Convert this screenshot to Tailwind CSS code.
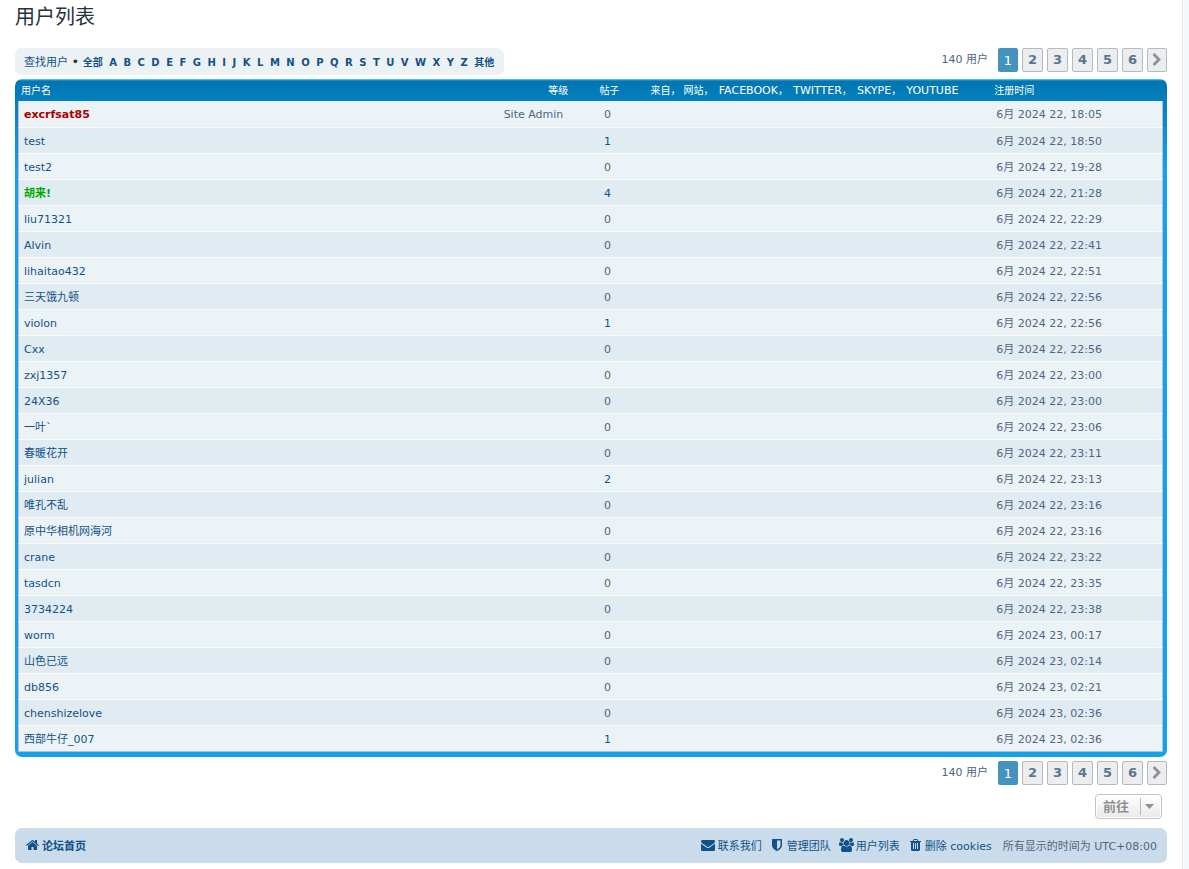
<!DOCTYPE html>
<html lang="zh-CN">
<head>
<meta charset="utf-8">
<meta name="viewport" content="width=device-width, initial-scale=1">
<title>用户列表</title>
<script src="https://cdn.jsdelivr.net/npm/@tailwindcss/browser@4"></script>
</head>
<body class="bg-[#f5f7fa] font-['DejaVu_Sans','Noto_Sans_CJK_SC',sans-serif] text-[11px] leading-[14px] text-[#536482]">
<svg class="hidden" aria-hidden="true">
  <symbol id="chevron" viewBox="0 0 1792 1792"><path d="M1363 877l-742 742q-19 19-45 19t-45-19l-166-166q-19-19-19-45t19-45l531-531-531-531q-19-19-19-45t19-45l166-166q19-19 45-19t45 19l742 742q19 19 19 45t-19 45z"/></symbol>
</svg>
<div class="mr-[6px] min-h-screen border-r border-[#e6e9ed] bg-white pl-[15px] pr-[15px] pb-[6px]">
  <h2 class="pt-[5px] text-[20px] leading-[24px] text-[#28313f]">用户列表</h2>

  <div class="mt-[19px] flex items-start justify-between">
    <nav aria-label="查找用户" class="rounded-[7px] bg-[#ecf1f3] pl-[9px] pr-[7px] pt-[7px] pb-[5px] whitespace-nowrap text-[#333333] [&_a]:text-[#105289] [&_a:hover]:underline">
      <a href="#">查找用户</a> <span class="text-[13px]">•</span>
      <strong class="text-[10px] [&_a]:pr-[3px]"><a href="#">全部</a>
      <a href="#">A</a> <a href="#">B</a> <a href="#">C</a> <a href="#">D</a> <a href="#">E</a> <a href="#">F</a> <a href="#">G</a> <a href="#">H</a> <a href="#">I</a> <a href="#">J</a> <a href="#">K</a> <a href="#">L</a> <a href="#">M</a> <a href="#">N</a> <a href="#">O</a> <a href="#">P</a> <a href="#">Q</a> <a href="#">R</a> <a href="#">S</a> <a href="#">T</a> <a href="#">U</a> <a href="#">V</a> <a href="#">W</a> <a href="#">X</a> <a href="#">Y</a> <a href="#">Z</a>
      <a href="#">其他</a></strong>
    </nav>
    <div class="flex items-start">
      <span class="mr-[10px] mt-[5px]">140 用户</span>
      <nav aria-label="分页" class="flex gap-[4px] text-[13px] leading-[22px] font-bold text-[#5c758c] [&_a]:flex [&_a]:h-[24px] [&_a]:w-[21px] [&_a]:items-center [&_a]:justify-center [&_a]:rounded-[2px] [&_a]:border [&_a]:border-[#b4bac0] [&_a]:bg-[#ecedee] [&_a:last-child]:w-[20px]">
        <span class="h-[24px] w-[20px] rounded-[2px] bg-[#4692bf] text-center leading-[25px] font-normal text-white" aria-current="page">1</span>
        <a href="#">2</a><a href="#">3</a><a href="#">4</a><a href="#">5</a><a href="#">6</a>
        <a href="#" aria-label="下一页"><svg class="size-[14px] shrink-0 fill-[#8f8f8f]"><use href="#chevron"/></svg></a>
      </nav>
    </div>
  </div>

  <div class="mt-[4px] rounded-[7px] bg-[linear-gradient(to_bottom,#6aceff_0px,#0076b1_2px,#12a3eb_92px,#12a3eb_100%)] pl-[3px] pr-[4px] pb-[5px]">
    <table class="w-full table-fixed border-separate border-spacing-0 [&_th]:h-[22px] [&_th]:p-0 [&_th]:pt-[2px] [&_th]:text-left [&_th]:text-[10px] [&_th]:leading-[14px] [&_th]:font-normal [&_th]:whitespace-nowrap [&_th]:text-white [&_td]:h-[26px] [&_tbody_tr:first-child_td]:h-[27px] [&_td]:border-b [&_td]:border-[#fafafa] [&_td]:p-0 [&_td]:pt-[2px] [&_tbody_tr:nth-child(odd)]:bg-[#ecf3f7] [&_tbody_tr:nth-child(even)]:bg-[#e1ebf2] [&_td:first-child]:border-l [&_td:first-child]:border-l-[#bbbbcc] [&_td:first-child]:pl-[5px] [&_td:last-child]:border-r [&_td:last-child]:border-r-[#bbbbcc] [&_td:last-child]:pl-[5px] [&_td:nth-child(2)]:pr-[4px] [&_td:nth-child(2)]:text-center [&_tr:last-child_td]:border-b-[#bbbbcc] [&_td_a]:text-[#105289] [&_a:hover]:underline">
      <colgroup><col class="w-[48.5%]"><col class="w-[6.3%]"><col class="w-[30.2%]"><col></colgroup>
      <thead>
        <tr>
          <th scope="col"><span class="flex justify-between pl-[3px] pr-[5px]"><a href="#">用户名</a><a href="#">等级</a></span></th>
          <th scope="col"><span class="block text-center"><a href="#">帖子</a></span></th>
          <th scope="col"><span class="pl-[5px] [&_span]:ml-[2px] [&_span]:text-[11px]">来自， 网站， <span>FACEBOOK</span>， <span>TWITTER</span>， <span>SKYPE</span>， <span>YOUTUBE</span></span></th>
          <th scope="col"><span class="pl-[3px]"><a href="#">注册时间</a></span></th>
        </tr>
      </thead>
      <tbody>
        <tr><td><span class="flex justify-between pr-[10px]"><a href="#"><b class="text-[#aa0000]">excrfsat85</b></a><span>Site Admin</span></span></td><td>0</td><td></td><td>6月 2024 22, 18:05</td></tr>
        <tr><td><a href="#">test</a></td><td><a href="#">1</a></td><td></td><td>6月 2024 22, 18:50</td></tr>
        <tr><td><a href="#">test2</a></td><td>0</td><td></td><td>6月 2024 22, 19:28</td></tr>
        <tr><td><a href="#"><b class="text-[#00aa00]">胡来!</b></a></td><td><a href="#">4</a></td><td></td><td>6月 2024 22, 21:28</td></tr>
        <tr><td><a href="#">liu71321</a></td><td>0</td><td></td><td>6月 2024 22, 22:29</td></tr>
        <tr><td><a href="#">Alvin</a></td><td>0</td><td></td><td>6月 2024 22, 22:41</td></tr>
        <tr><td><a href="#">lihaitao432</a></td><td>0</td><td></td><td>6月 2024 22, 22:51</td></tr>
        <tr><td><a href="#">三天饿九顿</a></td><td>0</td><td></td><td>6月 2024 22, 22:56</td></tr>
        <tr><td><a href="#">violon</a></td><td><a href="#">1</a></td><td></td><td>6月 2024 22, 22:56</td></tr>
        <tr><td><a href="#">Cxx</a></td><td>0</td><td></td><td>6月 2024 22, 22:56</td></tr>
        <tr><td><a href="#">zxj1357</a></td><td>0</td><td></td><td>6月 2024 22, 23:00</td></tr>
        <tr><td><a href="#">24X36</a></td><td>0</td><td></td><td>6月 2024 22, 23:00</td></tr>
        <tr><td><a href="#">一叶`</a></td><td>0</td><td></td><td>6月 2024 22, 23:06</td></tr>
        <tr><td><a href="#">春暖花开</a></td><td>0</td><td></td><td>6月 2024 22, 23:11</td></tr>
        <tr><td><a href="#">julian</a></td><td><a href="#">2</a></td><td></td><td>6月 2024 22, 23:13</td></tr>
        <tr><td><a href="#">唯孔不乱</a></td><td>0</td><td></td><td>6月 2024 22, 23:16</td></tr>
        <tr><td><a href="#">原中华相机网海河</a></td><td>0</td><td></td><td>6月 2024 22, 23:16</td></tr>
        <tr><td><a href="#">crane</a></td><td>0</td><td></td><td>6月 2024 22, 23:22</td></tr>
        <tr><td><a href="#">tasdcn</a></td><td>0</td><td></td><td>6月 2024 22, 23:35</td></tr>
        <tr><td><a href="#">3734224</a></td><td>0</td><td></td><td>6月 2024 22, 23:38</td></tr>
        <tr><td><a href="#">worm</a></td><td>0</td><td></td><td>6月 2024 23, 00:17</td></tr>
        <tr><td><a href="#">山色已远</a></td><td>0</td><td></td><td>6月 2024 23, 02:14</td></tr>
        <tr><td><a href="#">db856</a></td><td>0</td><td></td><td>6月 2024 23, 02:21</td></tr>
        <tr><td><a href="#">chenshizelove</a></td><td>0</td><td></td><td>6月 2024 23, 02:36</td></tr>
        <tr><td><a href="#">西部牛仔_007</a></td><td><a href="#">1</a></td><td></td><td>6月 2024 23, 02:36</td></tr>
      </tbody>
    </table>
  </div>

  <div class="mt-[4px] flex items-start justify-end">
    <span class="mr-[10px] mt-[5px]">140 用户</span>
    <nav aria-label="底部分页" class="flex gap-[4px] text-[13px] leading-[22px] font-bold text-[#5c758c] [&_a]:flex [&_a]:h-[24px] [&_a]:w-[21px] [&_a]:items-center [&_a]:justify-center [&_a]:rounded-[2px] [&_a]:border [&_a]:border-[#b4bac0] [&_a]:bg-[#ecedee] [&_a:last-child]:w-[20px]">
      <span class="h-[24px] w-[20px] rounded-[2px] bg-[#4692bf] text-center leading-[25px] font-normal text-white" aria-current="page">1</span>
      <a href="#">2</a><a href="#">3</a><a href="#">4</a><a href="#">5</a><a href="#">6</a>
      <a href="#" aria-label="下一页"><svg class="size-[14px] shrink-0 fill-[#8f8f8f]"><use href="#chevron"/></svg></a>
    </nav>
  </div>

  <div class="mt-[9px] flex justify-end pr-[5px]">
    <button type="button" class="flex h-[25px] w-[67px] items-center justify-between rounded-[4px] border border-[#c7c3bf] bg-linear-to-b from-white to-[#e9e9e9] pl-[7px] pr-[7px] text-[13px] leading-[18px] font-semibold text-[#8f8f8f] shadow-[inset_0_0_0_1px_#ffffff]">
      <span>前往</span>
      <span class="flex h-[17px] items-center border-l border-[#b9b9b9] pl-[4px]"><svg class="h-[5px] w-[9px] fill-[#8f8f8f]" viewBox="0 0 9 5"><path d="M0 0h9L4.500 5z"/></svg></span>
    </button>
  </div>

  <footer class="mt-[9px] flex h-[35px] items-center justify-between rounded-[7px] bg-[#cadceb] pt-[2px] pl-[11px] pr-[10px] whitespace-nowrap [&_a]:flex [&_a]:items-center [&_a]:text-[#105289] [&_svg]:mb-[4px] [&_svg]:h-[14px] [&_svg]:shrink-0 [&_svg]:fill-[#105289]">
    <a href="#" class="gap-[3px] font-bold"><svg class="w-[13px]" viewBox="64 0 1664 1792"><path d="M1472 992v480q0 26-19 45t-45 19h-384v-384h-256v384h-384q-26 0-45-19t-19-45v-480q0-1 .5-3t.5-3l575-474 575 474q1 2 1 6zm223-69l-62 74q-8 9-21 11h-3q-13 0-21-7l-692-577-692 577q-12 8-24 7-13-2-21-11l-62-74q-8-10-7-23.500t11-21.500l719-599q32-26 76-26t76 26l244 204v-195q0-14 9-23t23-9h192q14 0 23 9t9 23v408l219 182q10 8 11 21.500t-7 23.500z"/></svg>论坛首页</a>
    <div class="flex items-center">
      <a href="#" class="mr-[10px] gap-[3px]"><svg class="w-[14px]" viewBox="0 0 1792 1792"><path d="M1792 710v794q0 66-47 113t-113 47h-1472q-66 0-113-47t-47-113v-794q44 49 101 87 362 246 497 345 57 42 92.500 65.500t94.500 48 110 24.500h2q51 0 110-24.500t94.500-48 92.500-65.500q170-123 498-345 57-39 100-87zm0-294q0 79-49 151t-122 123q-376 261-468 325-10 7-42.500 31t-54 38.500-52 32.500-57.500 27-50 9h-2q-23 0-50-9t-57.500-27-52-32.500-54-38.500-42.500-31q-91-64-262-182.500t-205-142.500q-62-42-117-115.500t-55-136.500q0-78 41.500-130t118.500-52h1472q65 0 112.500 47t47.500 113z"/></svg>联系我们</a>
      <a href="#" class="mr-[8px] gap-[5px]"><svg class="w-[10px]" viewBox="256 0 1280 1792"><path d="M1344 960v-640h-448v1137q119-63 213-137 235-184 235-360zm192-768v768q0 86-33.500 170.500t-83 150-118 127.500-126.500 103-121 77.500-89.500 49.500-42.500 20q-12 6-26 6t-26-6q-16-7-42.500-20t-89.500-49.500-121-77.500-126.500-103-118-127.500-83-150-33.500-170.500v-768q0-26 19-45t45-19h1152q26 0 45 19t19 45z"/></svg>管理团队</a>
      <a href="#" class="mr-[10px] gap-[2px]"><svg class="w-[15px]" viewBox="-64 0 1920 1792"><path d="M529 896q-162 5-265 128h-134q-82 0-138-40.500t-56-118.500q0-353 124-353 6 0 43.500 21t97.500 42.500 119 21.500q67 0 133-23-5 37-5 66 0 139 81 256zm1071 637q0 120-73 189.500t-194 69.500h-874q-121 0-194-69.500t-73-189.500q0-53 3.500-103.500t14-109 26.500-108.500 43-97.500 62-81 85.500-53.500 111.500-20q10 0 43 21.500t73 48 107 48 135 21.500 135-21.500 107-48 73-48 43-21.500q61 0 111.500 20t85.500 53.500 62 81 43 97.500 26.500 108.500 14 109 3.500 103.500zm-1024-1277q0 106-75 181t-181 75-181-75-75-181 75-181 181-75 181 75 75 181zm704 384q0 159-112.500 271.500t-271.500 112.500-271.500-112.500-112.500-271.500 112.500-271.500 271.500-112.500 271.500 112.500 112.500 271.500zm576 225q0 78-56 118.500t-138 40.500h-134q-103-123-265-128 81-117 81-256 0-29-5-66 66 23 133 23 59 0 119-21.500t97.500-42.500 43.500-21q124 0 124 353zm-128-609q0 106-75 181t-181 75-181-75-75-181 75-181 181-75 181 75 75 181z"/></svg>用户列表</a>
      <a href="#" class="mr-[11px] gap-[4px]"><svg class="w-[11px]" viewBox="192 0 1408 1792"><path d="M704 1376v-704q0-14-9-23t-23-9h-64q-14 0-23 9t-9 23v704q0 14 9 23t23 9h64q14 0 23-9t9-23zm256 0v-704q0-14-9-23t-23-9h-64q-14 0-23 9t-9 23v704q0 14 9 23t23 9h64q14 0 23-9t9-23zm256 0v-704q0-14-9-23t-23-9h-64q-14 0-23 9t-9 23v704q0 14 9 23t23 9h64q14 0 23-9t9-23zm-544-992h448l-48-117q-7-9-17-11h-317q-10 2-17 11zm928 32v64q0 14-9 23t-23 9h-96v948q0 83-47 143.500t-113 60.500h-832q-66 0-113-58.500t-47-141.500v-952h-96q-14 0-23-9t-9-23v-64q0-14 9-23t23-9h309l70-167q15-37 54-63t79-26h320q40 0 79 26t54 63l70 167h309q14 0 23 9t9 23z"/></svg>删除 cookies</a>
      <span>所有显示的时间为 UTC+08:00</span>
    </div>
  </footer>
</div>
</body>
</html>
